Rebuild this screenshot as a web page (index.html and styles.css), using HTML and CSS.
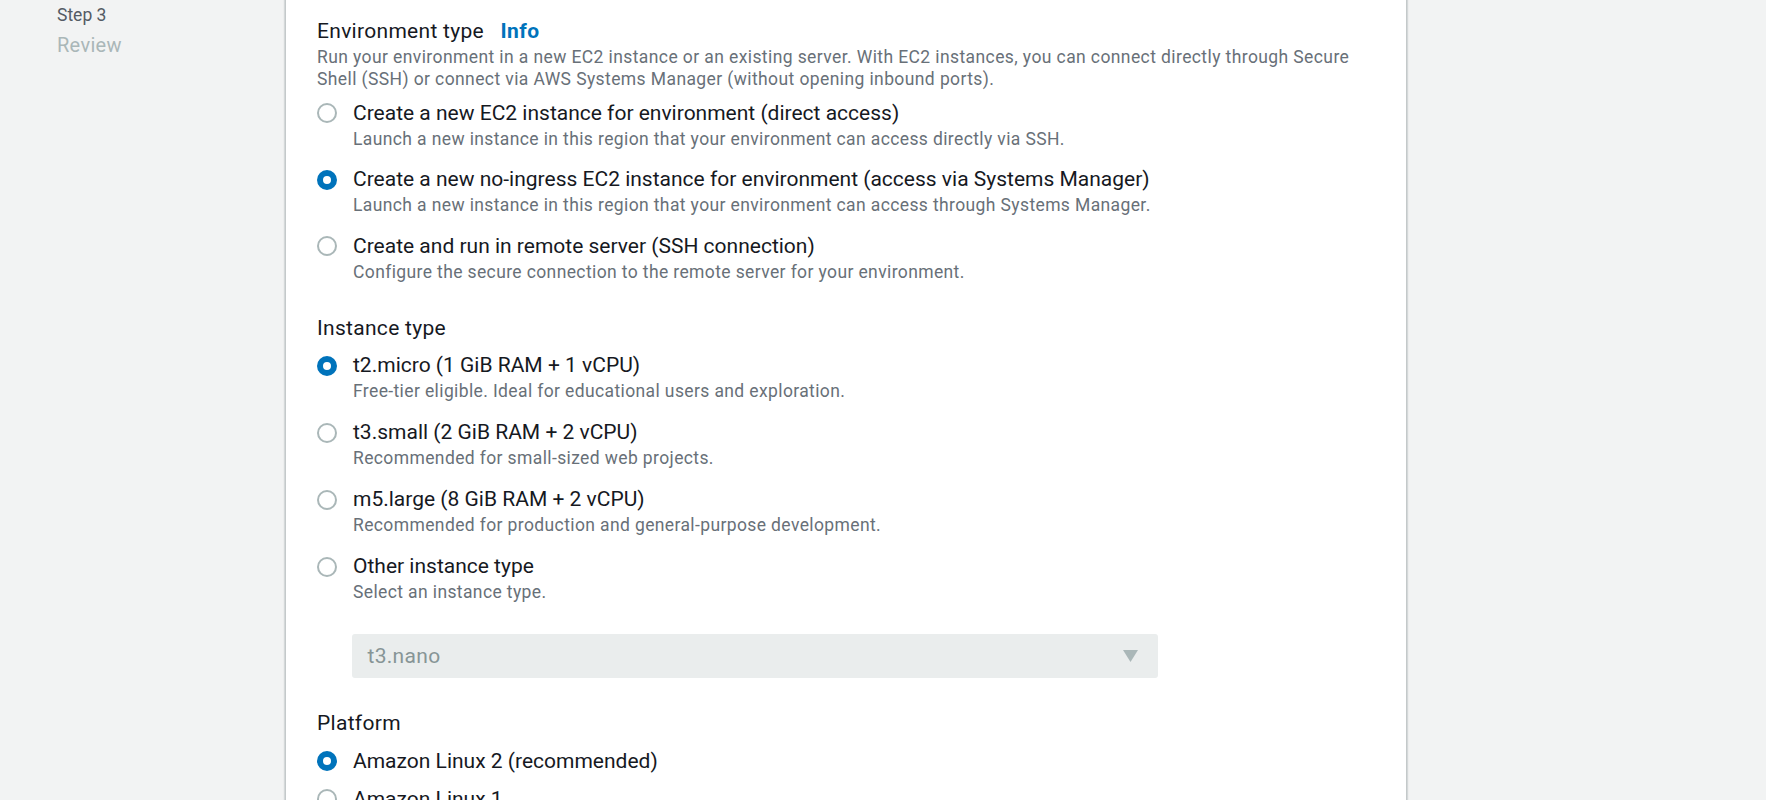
FILE: index.html
```html
<!DOCTYPE html>
<html lang="en">
<head>
<meta charset="utf-8">
<title>Create environment</title>
<link rel="stylesheet" href="styles.css">
</head>
<body>
<div class="page">
  <aside class="steps">
    <div class="step-num">Step 3</div>
    <div class="step-name">Review</div>
  </aside>
  <main class="panel">
    <section class="field">
      <h2 class="field-title">Environment type <a class="info" href="#">Info</a></h2>
      <p class="field-desc">Run your environment in a new EC2 instance or an existing server. With EC2 instances, you can connect directly through Secure Shell (SSH) or connect via AWS Systems Manager (without opening inbound ports).</p>
      <div class="radio-group env">
        <label class="radio">
          <span class="dot"></span>
          <span class="radio-text">
            <span class="radio-label">Create a new EC2 instance for environment (direct access)</span>
            <span class="radio-desc">Launch a new instance in this region that your environment can access directly via SSH.</span>
          </span>
        </label>
        <label class="radio">
          <span class="dot checked"></span>
          <span class="radio-text">
            <span class="radio-label">Create a new no-ingress EC2 instance for environment (access via Systems Manager)</span>
            <span class="radio-desc">Launch a new instance in this region that your environment can access through Systems Manager.</span>
          </span>
        </label>
        <label class="radio">
          <span class="dot"></span>
          <span class="radio-text">
            <span class="radio-label">Create and run in remote server (SSH connection)</span>
            <span class="radio-desc">Configure the secure connection to the remote server for your environment.</span>
          </span>
        </label>
      </div>
    </section>

    <section class="field instance-field">
      <h2 class="field-title">Instance type</h2>
      <div class="radio-group instance">
        <label class="radio">
          <span class="dot checked"></span>
          <span class="radio-text">
            <span class="radio-label">t2.micro (1 GiB RAM + 1 vCPU)</span>
            <span class="radio-desc">Free-tier eligible. Ideal for educational users and exploration.</span>
          </span>
        </label>
        <label class="radio">
          <span class="dot"></span>
          <span class="radio-text">
            <span class="radio-label">t3.small (2 GiB RAM + 2 vCPU)</span>
            <span class="radio-desc">Recommended for small-sized web projects.</span>
          </span>
        </label>
        <label class="radio">
          <span class="dot"></span>
          <span class="radio-text">
            <span class="radio-label">m5.large (8 GiB RAM + 2 vCPU)</span>
            <span class="radio-desc">Recommended for production and general-purpose development.</span>
          </span>
        </label>
        <label class="radio">
          <span class="dot"></span>
          <span class="radio-text">
            <span class="radio-label">Other instance type</span>
            <span class="radio-desc">Select an instance type.</span>
          </span>
        </label>
      </div>
      <div class="select">
        <span class="select-value">t3.nano</span>
        <svg class="caret" width="15" height="12" viewBox="0 0 15 12"><path d="M0 0 H15 L7.5 12 Z" fill="#aab7b8"/></svg>
      </div>
    </section>

    <section class="field platform">
      <h2 class="field-title">Platform</h2>
      <div class="radio-group compact">
        <label class="radio">
          <span class="dot checked"></span>
          <span class="radio-text">
            <span class="radio-label">Amazon Linux 2 (recommended)</span>
          </span>
        </label>
        <label class="radio">
          <span class="dot"></span>
          <span class="radio-text">
            <span class="radio-label">Amazon Linux 1</span>
          </span>
        </label>
      </div>
    </section>
  </main>
</div>
</body>
</html>
```

FILE: styles.css
```css
* { box-sizing: border-box; }

html, body {
  margin: 0;
  padding: 0;
  height: 800px;
  overflow: hidden;
  background: #f2f3f3;
  font-family: Roboto, "Liberation Sans", Arial, sans-serif;
  color: #16191f;
}

.page {
  display: flex;
  align-items: stretch;
  height: 800px;
}

.steps {
  width: 285px;
  flex: none;
  padding: 4px 0 0 57px;
}

.step-num {
  font-size: 17.5px;
  line-height: 22.5px;
  color: #545b64;
}

.step-name {
  margin-top: 5px;
  font-size: 20px;
  line-height: 27.5px;
  color: #aab7b8;
  letter-spacing: 0.3px;
}

.panel {
  width: 1122px;
  flex: none;
  background: #ffffff;
  border-left: 1px solid #c4c9ca;
  border-right: 1px solid #c4c9ca;
  box-shadow: 1px 0 1px rgba(0, 28, 36, 0.12), -1px 0 1px rgba(0, 28, 36, 0.12);
  padding: 16.6px 31px 0 31px;
}

.field.instance-field {
  margin-top: 31px;
}

.field.platform {
  margin-top: 31px;
}

.field-title {
  margin: 0;
  font-size: 21px;
  line-height: 29px;
  font-weight: 400;
  letter-spacing: 0.3px;
  color: #16191f;
}

.info {
  margin-left: 11px;
  color: #0073bb;
  font-weight: 700;
  letter-spacing: 0.4px;
  text-decoration: none;
}

.field-desc {
  margin: 0;
  font-size: 17.5px;
  line-height: 22.5px;
  letter-spacing: 0.4px;
  color: #687078;
  max-width: 1045px;
}

.radio-group {
  display: flex;
  flex-direction: column;
}

.radio-group.env {
  gap: 15px;
  margin-top: 8px;
}

.radio-group.instance {
  gap: 15.5px;
  margin-top: 8.3px;
}

.radio-group.compact {
  gap: 8.8px;
  margin-top: 9px;
}

.radio {
  display: flex;
  align-items: flex-start;
  gap: 16px;
  cursor: pointer;
}

.dot {
  flex: none;
  width: 20px;
  height: 20px;
  margin-top: 4.5px;
  border-radius: 50%;
  border: 2px solid #aab7b8;
  background: #ffffff;
}

.dot.checked {
  border: 6px solid #0073bb;
}

.radio-text {
  display: flex;
  flex-direction: column;
}

.radio-label {
  font-size: 21px;
  line-height: 29px;
  color: #16191f;
}

.radio-desc {
  font-size: 17.5px;
  line-height: 22.5px;
  letter-spacing: 0.38px;
  color: #687078;
}

.select {
  margin: 30px 0 0 34.5px;
  width: 806px;
  height: 44px;
  border-radius: 3px;
  background: #eaeded;
  display: flex;
  align-items: center;
  justify-content: space-between;
  padding: 0 20px 0 16px;
}

.select-value {
  font-size: 21px;
  letter-spacing: 0.3px;
  color: #879596;
}

.caret {
  display: block;
}
```
